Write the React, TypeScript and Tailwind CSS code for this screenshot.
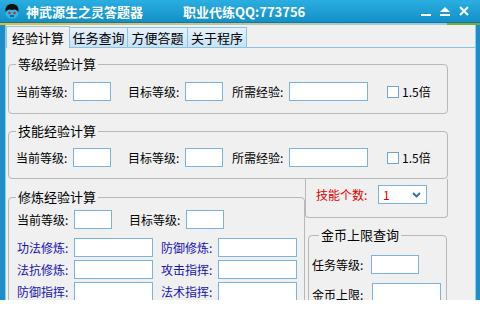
const FONT = { fontFamily: '"Noto Sans CJK SC", "Liberation Sans", sans-serif' }

function Input({ w, h = 19 }: { w: number; h?: number }) {
  return (
    <div
      className="shrink-0 bg-white border border-[#7ab4dc]"
      style={{ width: w, height: h }}
    />
  )
}

function Label({ text, w = 57, color = 'text-black' }: { text: string; w?: number; color?: string }) {
  return (
    <span className={`shrink-0 whitespace-nowrap text-[12px] leading-[19px] ${color}`} style={{ width: w }}>
      {text}
    </span>
  )
}

function Group({ title, className, children }: { title: string; className?: string; children: React.ReactNode }) {
  return (
    <fieldset className={`border border-[#b8b8b8] rounded-[4px] ${className ?? ''}`}>
      <legend className="ml-[7px] px-[2px] text-[13px] leading-[14px] text-black">{title}</legend>
      {children}
    </fieldset>
  )
}

function LevelRow() {
  return (
    <div className="flex items-center pl-[7px]">
      <Label text="当前等级:" />
      <Input w={38} />
      <span className="ml-[17px]" />
      <Label text="目标等级:" />
      <Input w={38} />
      <span className="ml-[9px]" />
      <Label text="所需经验:" />
      <Input w={79} />
      <div className="ml-[19px] w-[12px] h-[12px] bg-white border border-[#6aa6d6]" />
      <span className="ml-[3px] text-[12px] leading-[19px] text-black">1.5倍</span>
    </div>
  )
}

function AppIcon() {
  return (
    <svg width="16" height="16" viewBox="0 0 16 16">
      <ellipse cx="8" cy="10" rx="6.5" ry="5.5" fill="#2fb8e0" />
      <path d="M1.5 9 C1 3 4 1 8 1 C12 1 15 3 14.5 9 C12 6 10 6 8 7 C6 6 4 6 1.5 9 Z" fill="#111" />
      <circle cx="5.5" cy="10" r="1.3" fill="#e02030" />
      <circle cx="10.5" cy="10" r="1.3" fill="#e02030" />
      <path d="M6 13 L10 13" stroke="#115" strokeWidth="1" />
    </svg>
  )
}

const TABS = [
  { t: '经验计算', w: 64 },
  { t: '任务查询', w: 58 },
  { t: '方便答题', w: 60 },
  { t: '关于程序', w: 59 },
]

export default function App() {
  return (
    <div className="w-[480px] h-[300px] overflow-hidden flex flex-col bg-[#1b93cc]" style={FONT}>
      {/* title bar */}
      <div className="h-[22px] flex items-center bg-gradient-to-b from-[#2aaee0] to-[#1290c8] pl-[4px] pr-[10px]">
        <AppIcon />
        <span className="ml-[6px] text-white font-bold text-[13px] leading-none">神武源生之灵答题器</span>
        <span className="ml-[40px] text-white font-bold text-[13px] leading-none">职业代练QQ:773756</span>
        <div className="ml-auto flex items-center gap-[7px]">
          <svg width="12" height="12" viewBox="0 0 12 12"><rect x="1" y="9" width="10" height="2" fill="#fff" /></svg>
          <svg width="12" height="12" viewBox="0 0 12 12"><path d="M1 7 L6 2 L11 7 Z" fill="#fff" /><rect x="1" y="9" width="10" height="2" fill="#fff" /></svg>
          <svg width="12" height="12" viewBox="0 0 12 12"><path d="M2 2 L10 10 M10 2 L2 10" stroke="#fff" strokeWidth="2" /></svg>
        </div>
      </div>
      <div className="h-[1px] bg-[#2a6e90]" />
      <div className="h-[2px] flex">
        <div className="flex-1 bg-gradient-to-r from-[#d8c038] to-[#8ccfec]" />
        <div className="w-[33px] bg-[#6ab040]" />
      </div>

      {/* body */}
      <div className="flex-1 flex min-h-0">
        <div className="w-[6px] bg-[#1e8ec8] border-r border-[#8ccdee]" />
        <div className="flex-1 flex flex-col bg-[#f0f0f0] min-w-0">
          {/* tabs */}
          <div className="h-[22px] flex items-end">
            {TABS.map(({ t, w }, i) =>
              i === 0 ? (
                <div key={t} style={{ width: w }} className="h-[22px] flex items-center justify-center bg-[#f0f0f0] border border-b-0 border-[#8cc4e4] text-[13px] text-black relative top-[1px]">
                  {t}
                </div>
              ) : (
                <div key={t} style={{ width: w }} className="h-[20px] flex items-center justify-center bg-gradient-to-b from-[#e6f2fb] to-[#c8e2f4] border border-l-0 border-b-0 border-[#8cc4e4] text-[13px] text-black">
                  {t}
                </div>
              )
            )}
          </div>
          <div className="flex-1 border-t border-[#8cc4e4] pt-[9px] pl-[2px] min-h-0">
            <Group title="等级经验计算" className="w-[440px] pt-[11px] pb-[12px]">
              <LevelRow />
            </Group>
            <Group title="技能经验计算" className="w-[440px] mt-[10px] pt-[10px] pb-[11px]">
              <LevelRow />
            </Group>
            <div className="flex">
              {/* left column */}
              <Group title="修炼经验计算" className="w-[297px] mt-[11px] pt-[6px] pb-[6px] self-start">
                <div className="flex items-center pl-[8px]">
                  <Label text="当前等级:" />
                  <Input w={38} />
                  <span className="ml-[17px]" />
                  <Label text="目标等级:" />
                  <Input w={38} />
                </div>
                <div className="mt-[9px] flex flex-col gap-[3px] pl-[8px]">
                  {[
                    ['功法修炼:', '防御修炼:'],
                    ['法抗修炼:', '攻击指挥:'],
                    ['防御指挥:', '法术指挥:'],
                  ].map(([a, b]) => (
                    <div key={a} className="flex items-center">
                      <Label text={a} color="text-[#1414b4]" />
                      <Input w={79} />
                      <span className="ml-[8px]" />
                      <Label text={b} color="text-[#1414b4]" />
                      <Input w={79} />
                    </div>
                  ))}
                </div>
              </Group>
              {/* right column */}
              <div className="w-[143px] flex flex-col">
                <div className="h-[39px] border border-t-0 border-[#b8b8b8] rounded-b-[4px] flex items-start pt-[6px] pl-[10px]">
                  <Label text="技能个数:" w={62} color="text-[#e00000]" />
                  <div className="w-[49px] h-[19px] bg-white border border-[#7ab4dc] flex items-center justify-between pl-[4px] pr-[5px]">
                    <span className="text-[12px] leading-none text-[#e00000]">1</span>
                    <svg width="9" height="6" viewBox="0 0 9 6"><path d="M1 1 L4.5 4.5 L8 1" stroke="#2a6ab0" strokeWidth="1.8" fill="none" /></svg>
                  </div>
                </div>
                <Group title="金币上限查询" className="ml-[3px] w-[139px] mt-[10px] pt-[13px] pl-[3px] pb-[10px]">
                  <div className="flex items-center">
                    <Label text="任务等级:" w={59} />
                    <Input w={48} />
                  </div>
                  <div className="mt-[9px] flex items-center">
                    <Label text="金币上限:" w={60} />
                    <Input w={69} h={22} />
                  </div>
                </Group>
              </div>
            </div>
          </div>
        </div>
        <div className="w-[5px] bg-[#1e8ec8] border-l border-[#8ccdee]" />
      </div>
    </div>
  )
}
